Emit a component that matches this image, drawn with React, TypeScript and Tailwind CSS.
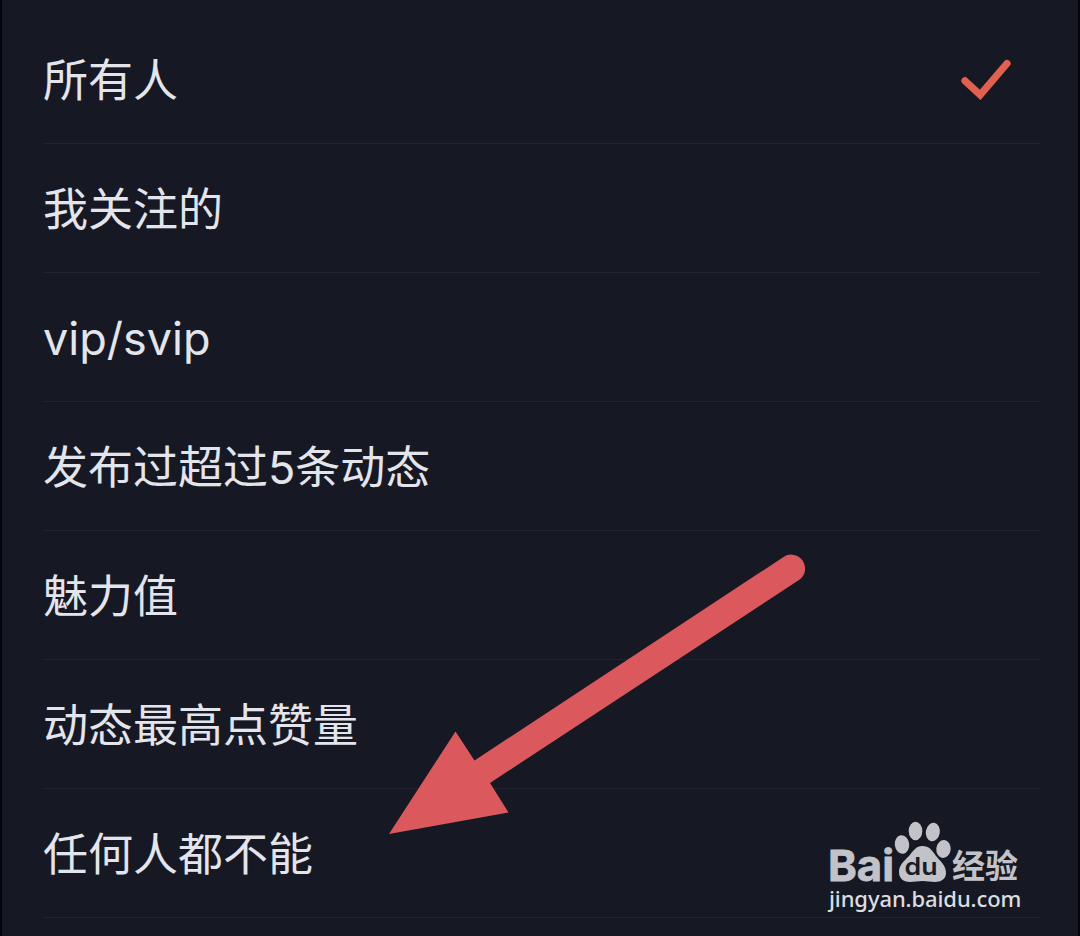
const options = [
  { label: '所有人', selected: true },
  { label: '我关注的' },
  { label: 'vip/svip' },
  { label: '发布过超过5条动态' },
  { label: '魅力值' },
  { label: '动态最高点赞量' },
  { label: '任何人都不能' },
];

const CheckIcon = () => (
  <svg width="52" height="42" viewBox="0 0 52 42" fill="none" className="mr-[-28px]">
    <path d="M5 22.8 L20.2 36.9 L47 5.5" stroke="#e2604f" strokeWidth="7.2" strokeLinecap="round" strokeLinejoin="miter" />
  </svg>
);

const Arrow = () => (
  <svg width="430" height="290" viewBox="380 550 430 290" className="absolute left-[380px] top-[550px] pointer-events-none">
    <path d="M389 834 L455.5 731.5 L474.5 760.5 L783.5 557 A13.8 13.8 0 0 1 799 580 L490 783 L508.5 812.5 Z" fill="#db585d" />
  </svg>
);

const Watermark = () => (
  <div className="absolute left-[820px] top-[815px] w-[210px] pointer-events-none">
    <svg width="210" height="70" viewBox="820 815 210 70" fill="#c2c3c8" className="block overflow-visible">
      <text x="828" y="881" fontFamily="Inter, sans-serif" fontSize="43" fontWeight="700" stroke="#c2c3c8" strokeWidth="0.8" textLength="66" lengthAdjust="spacingAndGlyphs">Bai</text>
      <ellipse cx="902" cy="844.5" rx="7.2" ry="9.3" transform="rotate(-8 902 844.5)" />
      <ellipse cx="915.5" cy="831" rx="6.8" ry="9.3" />
      <ellipse cx="932.8" cy="832" rx="7" ry="9.3" transform="rotate(10 932.8 832)" />
      <ellipse cx="943.5" cy="849" rx="7.2" ry="9" transform="rotate(6 943.5 849)" />
      <path d="M922.5 846 C929 846 932 850 936 856 C940 861 946 865 946 873 C946 879 941 882 935 882 C931 882 927 881 922.5 881 C918 881 914 882 910 882 C903 882 899 878 899 872 C899 865 904 861 909 856 C913 851 916 846 922.5 846 Z" />
      <text x="904.5" y="875.3" fontFamily="Inter, sans-serif" fontSize="24" fontWeight="600" fill="#191b26" textLength="33" lengthAdjust="spacingAndGlyphs">du</text>
      <text x="952" y="877.5" fontFamily="Noto Sans CJK SC, sans-serif" fontSize="33" fontWeight="700" textLength="66" lengthAdjust="spacingAndGlyphs">经验</text>
    </svg>
    <div className="pl-[9px] font-['Noto_Sans',sans-serif] text-[22px] font-medium leading-[26px] tracking-[-0.1px] text-[#dcdde1] whitespace-nowrap">jingyan.baidu.com</div>
  </div>
);

export default function App() {
  return (
    <div className="relative h-[936px] w-[1080px] overflow-hidden border-x-2 border-[#05060c] bg-[#161923] pt-[15px]">
      <ul className="pl-[41px] pr-[38px]">
        {options.map((option) => (
          <li key={option.label} className="flex h-[129px] items-center justify-between border-b border-[#22252f] pr-[56px]">
            <span className="pt-[3px] font-['Inter','Noto_Sans_CJK_SC',sans-serif] text-[45px] leading-none text-[#e4e5ec]">
              {option.label}
            </span>
            {option.selected && <CheckIcon />}
          </li>
        ))}
      </ul>
      <div className="absolute inset-0 -left-[2px]">
        <Arrow />
        <Watermark />
      </div>
    </div>
  );
}
